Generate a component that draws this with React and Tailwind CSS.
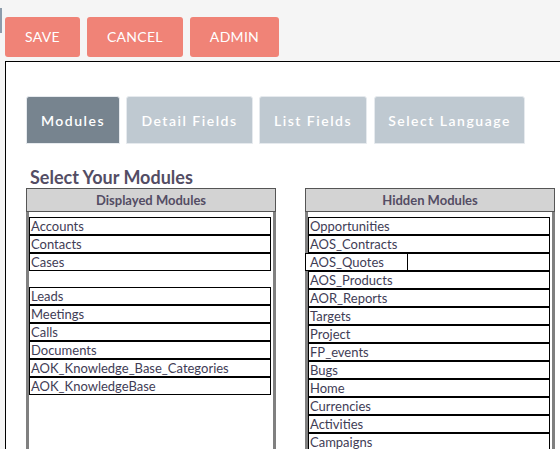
import React from 'react';

const displayed = [
    'Accounts', 'Contacts', 'Cases', null,
    'Leads', 'Meetings', 'Calls', 'Documents',
    'AOK_Knowledge_Base_Categories', 'AOK_KnowledgeBase',
];

const hidden = [
    'Opportunities', 'AOS_Contracts', 'AOS_Quotes', 'AOS_Products', 'AOR_Reports',
    'Targets', 'Project', 'FP_events', 'Bugs', 'Home', 'Currencies', 'Activities',
    'Campaigns',
];

const tabs = [
    { label: 'Modules', w: 'w-[94px]' },
    { label: 'Detail Fields', w: 'w-[127px]' },
    { label: 'List Fields', w: 'w-[108px]' },
    { label: 'Select Language', w: 'w-[151px] ml-px' },
];

function Item({ label, dragged }) {
    if (label === null) return <div className="h-[16px]" />;
    return (
        <div className="relative h-[18px] border border-black bg-white pl-px text-[13px] leading-[16px] text-[#3f3d56] whitespace-nowrap">
            {label}
            {dragged && (
                <div className="absolute left-[-4px] top-[-1px] h-[18px] w-[103px] border border-black bg-white pl-[4px] text-[13px] leading-[16px]">
                    {label}
                </div>
            )}
        </div>
    );
}

function ModuleList({ title, items, dragged }) {
    return (
        <div className="w-[250px]">
            <div className="h-[24px] border border-[#555] bg-[#d3d3d3] text-center text-[13px] font-bold leading-[22px] text-[#534d64]">
                {title}
            </div>
            <div className="h-[300px] border-x-[3px] border-[#808080] bg-white pt-[5px] pr-[2px]">
                {items.map((m, i) => (
                    <Item key={i} label={m} dragged={m === dragged} />
                ))}
            </div>
        </div>
    );
}

export default function App() {
    return (
        <div className="w-[560px] h-[449px] overflow-hidden bg-[#f5f5f5]" style={{ fontFamily: 'Lato, "Open Sans", sans-serif' }}>
            {/* Buttons */}
            <div className="flex items-start pt-[8px]">
                <div className="w-[2px] h-[25px] bg-[#8d9cab]" />
                <div className="flex gap-[7px] ml-[3px] mt-[9px]">
                    {['SAVE', 'CANCEL', 'ADMIN'].map((b) => (
                        <button key={b}
                                className="h-[40px] px-[20px] rounded-[3px] bg-[#f08377] text-white text-[14px] tracking-[0.3px] leading-[38px]">
                            {b}
                        </button>
                    ))}
                </div>
            </div>

            {/* Panel */}
            <div className="mt-[4px] ml-[5px] w-[600px] h-[400px] border border-black bg-white pl-[20px] pt-[34px]">
                <div className="flex gap-[6px]">
                    {tabs.map((t, i) => (
                        <div key={t.label}
                             className={`h-[48px] rounded-t-[3px] border border-[#e6eaee] flex items-center justify-center text-white text-[14px] tracking-[1.5px] font-semibold ${t.w} ${i === 0 ? 'bg-[#77848f]' : 'bg-[#bfc9d1]'}`}>
                            {t.label}
                        </div>
                    ))}
                </div>

                <h2 className="mt-[22px] ml-[4px] text-[18px] font-bold leading-[22px] text-[#534d64]">
                    Select Your Modules
                </h2>

                <div className="flex gap-[29px]">
                    <ModuleList title="Displayed Modules" items={displayed} />
                    <ModuleList title="Hidden Modules" items={hidden} dragged="AOS_Quotes" />
                </div>
            </div>
        </div>
    );
}
